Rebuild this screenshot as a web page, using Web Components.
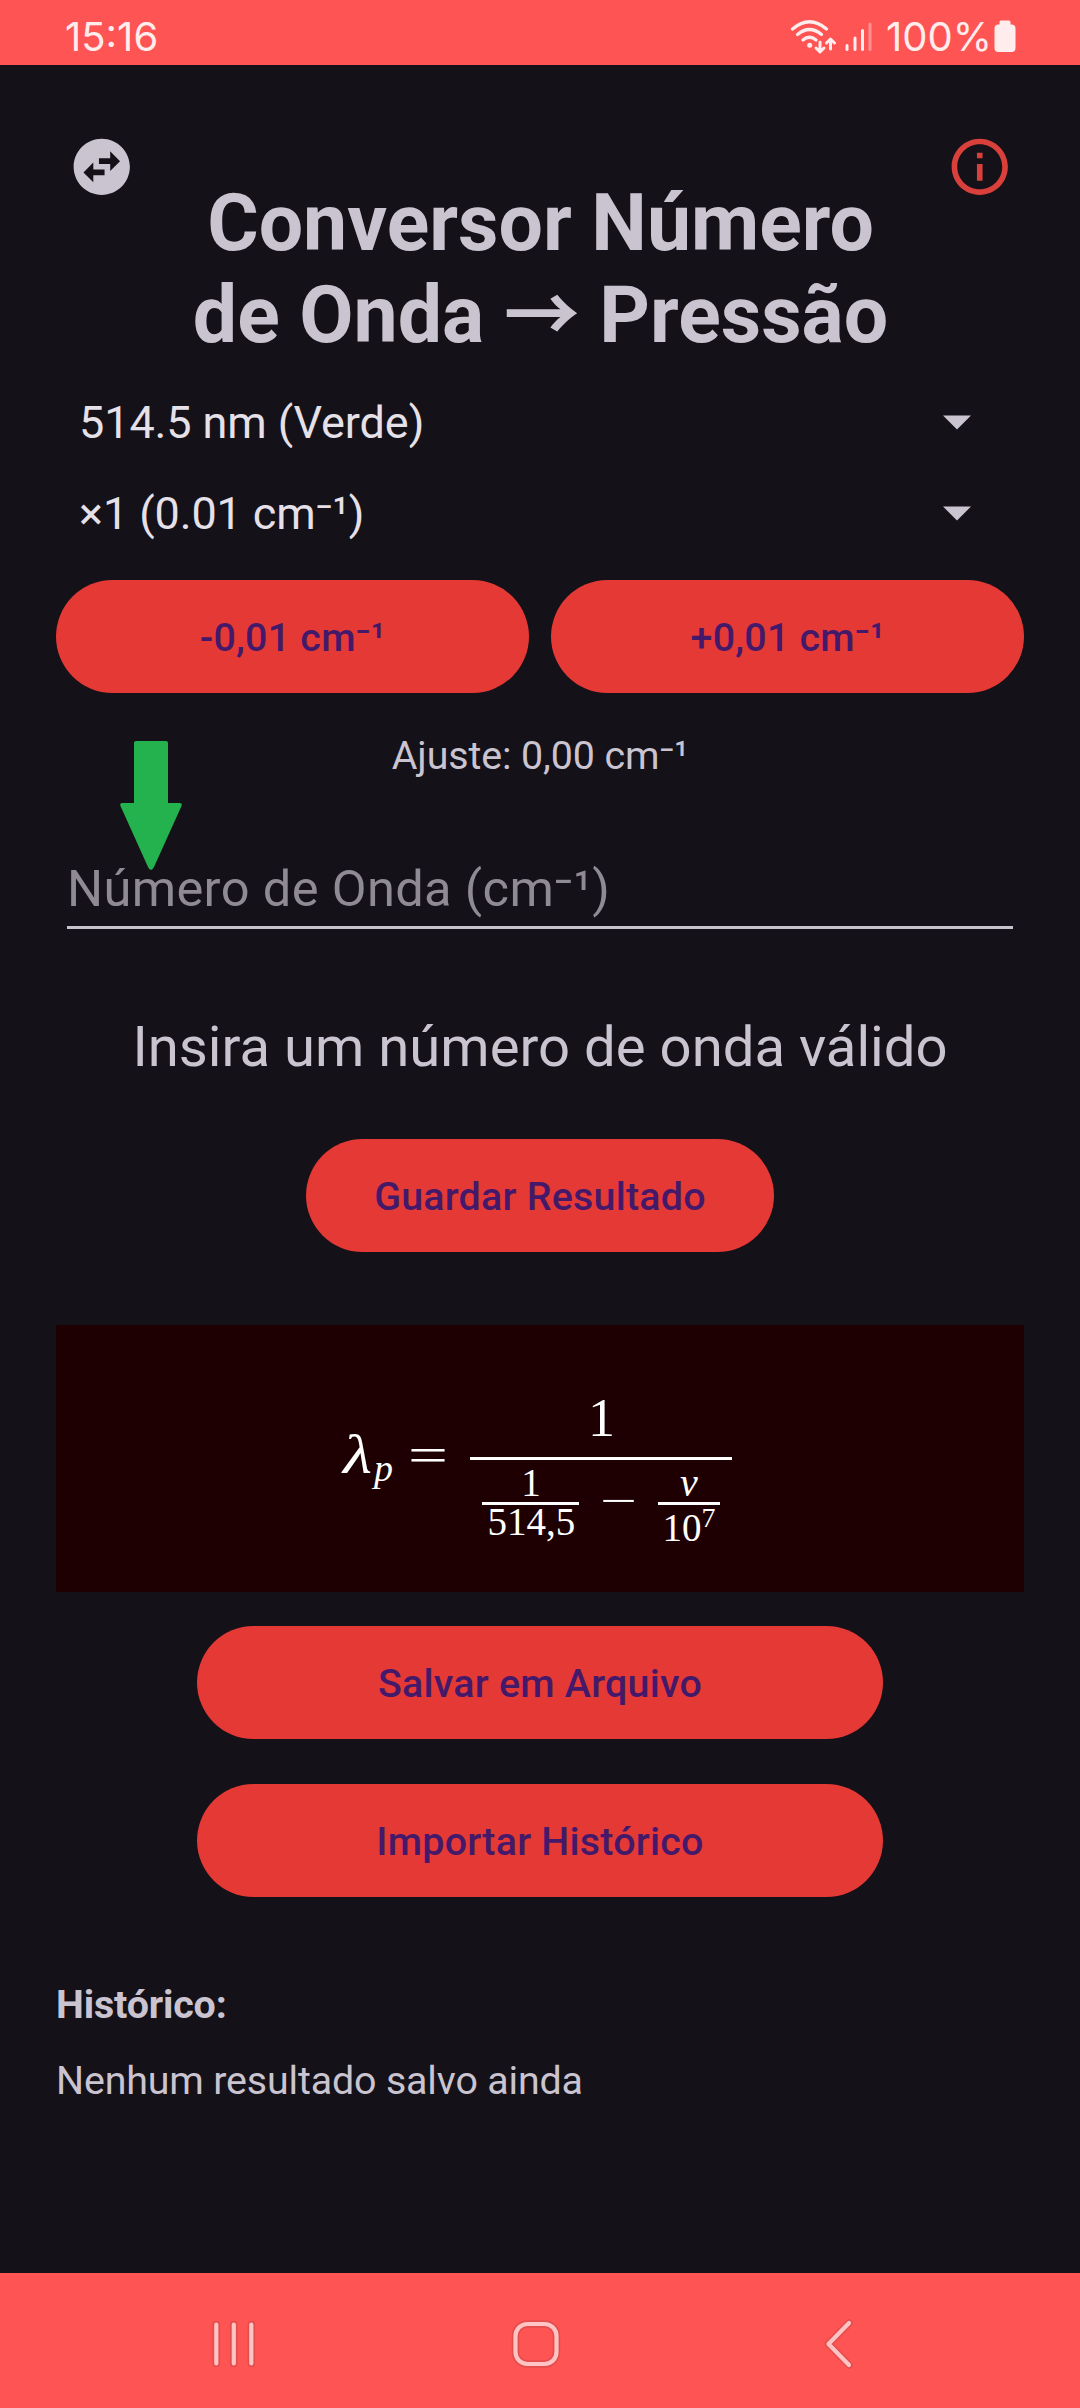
<!DOCTYPE html>
<html lang="pt-BR">
<head>
<meta charset="utf-8">
<title>Conversor Número de Onda → Pressão</title>
<style>
html,body{margin:0;padding:0;background:#141118}
body{font-family:Roboto,"Liberation Sans",sans-serif;color:#cac4d0}
</style>
</head>
<body>
<converter-app></converter-app>
<script>
const define=(name,html)=>{
  const t=document.createElement('template');
  t.innerHTML=html;
  customElements.define(name,class extends HTMLElement{
    constructor(){
      super();
      this.attachShadow({mode:'open'}).append(t.content.cloneNode(true));
    }
  });
};

define('status-bar',`
<style>
:host{display:flex;box-sizing:border-box;height:65px;padding:0 64px 0 65px;background:#ff5454;color:#ffeded;align-items:center;justify-content:space-between;font:40px/48px Inter,Roboto,sans-serif}
.time,.pct{padding-top:8px}
.right{display:flex;align-items:center}
svg{display:block}
.pct{margin-left:12px}
.battery{margin-left:2px}
</style>
<span class="time">15:16</span>
<div class="right">
  <svg width="84" height="65" viewBox="790 0 84 65" fill="none" stroke="#ffeded" stroke-width="3" stroke-linecap="round" stroke-linejoin="round">
    <path d="M792.500 29Q809.500 14.500 826.500 29M797.500 34.500Q809.500 24.500 821.500 34.500M803 40Q809.500 34.500 816 40" stroke-width="3.300"/>
    <circle cx="809.700" cy="45.300" r="2.500" fill="#ffeded" stroke="none"/>
    <path d="M820 42V51M816 48L820 52L824 48M830.500 49V40M826.500 43L830.500 39L834.500 43"/>
    <path d="M847 45.500V49.500M855 38V49.500M862.500 30.500V49.500"/>
    <path d="M870 24V49.500" opacity=".4"/>
  </svg>
  <span class="pct">100%</span>
  <svg class="battery" width="22" height="65" viewBox="0 0 22 65"><path d="M7 20.500h8q1.500 0 1.500 1.500v2.500h1q4 0 4 4V48q0 4-4 4h-13q-4 0-4-4V28.500q0-4 4-4h1V22q0-1.500 1.500-1.500z" fill="#ffeded"/></svg>
</div>`);

define('app-header',`
<style>
:host{display:flex;justify-content:space-between;align-items:flex-start;height:296px;padding:0 11px 0 12px}
svg{display:block;width:67.5px;height:67.5px;margin-top:68.25px;flex:none}
h1{margin:112px 0 0;font-size:78.75px;line-height:92px;font-weight:700;text-align:center;white-space:nowrap}
</style>
<svg viewBox="0 0 24 24" fill="#cac4d0"><path fill-rule="evenodd" d="M22 12c0-5.520-4.480-10-10-10S2 6.480 2 12s4.480 10 10 10 10-4.480 10-10zm-7-5.500l3.500 3.500-3.500 3.500V11h-4V9h4V6.500zm-6 11L5.500 14 9 10.500V13h4v2H9v2.500z"/></svg>
<h1><slot></slot></h1>
<svg viewBox="0 0 24 24" fill="#d9403c"><path d="M11 7h2v2h-2zm0 4h2v6h-2zm1-9C6.480 2 2 6.480 2 12s4.480 10 10 10 10-4.480 10-10S17.520 2 12 2zm0 18c-4.410 0-8-3.590-8-8s3.590-8 8-8 8 3.590 8 8-3.590 8-8 8z"/></svg>`);

define('spinner-field',`
<style>
:host{display:flex;align-items:center;justify-content:space-between;height:91px;padding:0 53px 0 23px;font-size:45px;line-height:53px;color:#e6e0e9;letter-spacing:-.1px}
svg{display:block}
</style>
<span><slot></slot></span>
<svg width="28" height="15" viewBox="0 0 28 15"><path d="M0 .5H28L14 14.500z" fill="#cac4d0"/></svg>`);

define('pill-button',`
<style>
:host{display:block}
button{display:flex;align-items:center;justify-content:center;width:100%;height:113px;margin:0;padding:3px 0 0;border:0;border-radius:57px;background:#e53935;color:#44196a;font:500 39.375px/46px Roboto,sans-serif;letter-spacing:.25px}
</style>
<button type="button"><slot></slot></button>`);

define('wave-input',`
<style>
:host{display:block;position:relative;margin:0 11px;height:62px;border-bottom:3px solid #c8c2cc;font-size:50.625px;line-height:50px;color:#8f8a93;letter-spacing:.35px}
svg{position:absolute;left:53px;top:-123px}
</style>
<span><slot></slot></span>
<svg width="62" height="130" viewBox="0 0 62 130"><path d="M16 0H46Q48 0 48 2V62H60Q62.500 62 61.500 65L34 126Q31 132 28 126L.5 65Q-.5 62 2 62H14V2Q14 0 16 0z" fill="#24b24f"/></svg>`);

define('formula-card',`
<style>
:host{display:block;height:267px;background:#1e0002}
svg{display:block;width:968px;height:267px}
text{font-family:"Liberation Serif",serif;fill:#fff}
.i{font-style:italic}
</style>
<svg viewBox="56 1325 968 267">
  <text class="i" x="343" y="1473" font-size="54" textLength="29" lengthAdjust="spacingAndGlyphs">λ</text>
  <text class="i" x="374" y="1481" font-size="38">p</text>
  <text x="408" y="1471.500" font-size="50" textLength="40" lengthAdjust="spacingAndGlyphs">=</text>
  <text x="601.500" y="1436" font-size="54" text-anchor="middle">1</text>
  <path d="M470 1458.500H732M482 1503.500H579M658 1503.500H720" stroke="#fff" stroke-width="3"/>
  <text x="531" y="1496" font-size="39" text-anchor="middle">1</text>
  <text x="487.500" y="1535" font-size="39">514,5</text>
  <text x="600" y="1513.500" font-size="40" textLength="37" lengthAdjust="spacingAndGlyphs">−</text>
  <text class="i" x="680" y="1496" font-size="40">ν</text>
  <text x="662.500" y="1541" font-size="39">10</text>
  <text x="701.500" y="1527" font-size="28">7</text>
</svg>`);

define('nav-bar',`
<style>
:host{display:flex;align-items:center;justify-content:space-between;box-sizing:border-box;height:135px;padding:6px 222px 0 206px;background:#ff5454}
svg{display:block;width:56px;height:56px;fill:none;stroke-linecap:round;stroke-linejoin:round}
.home{margin-left:8px}
.halo{stroke:#e24d4e;stroke-width:7.5}
.line{stroke:#ffc3c3;stroke-width:4.2}
</style>
<svg viewBox="0 0 56 56"><path class="halo" d="M10.300 8.500V47.500M27.800 8.500V47.500M45.300 8.500V47.500"/><path class="line" d="M10.300 8.500V47.500M27.800 8.500V47.500M45.300 8.500V47.500"/></svg>
<svg class="home" viewBox="0 0 56 56"><rect class="halo" x="7.500" y="8" width="41" height="40" rx="12"/><rect class="line" x="7.500" y="8" width="41" height="40" rx="12"/></svg>
<svg viewBox="0 0 56 56"><path class="halo" d="M47 7L26.500 28L47 49"/><path class="line" d="M47 7L26.500 28L47 49"/></svg>`);

define('converter-app',`
<style>
:host{display:flex;flex-direction:column;width:1080px;height:2408px;background:#141118}
main{flex:1;display:flex;flex-direction:column;padding:0 56px}
.arrow{font-family:"Noto Sans CJK JP",sans-serif;font-weight:700;font-size:76px;line-height:0}
.spinners{margin-top:16px}
.pair{display:grid;grid-template-columns:1fr 1fr;gap:22px;margin-top:21px}
.adjust{margin-top:40px;font-size:39.375px;line-height:46px;text-align:center;letter-spacing:-.1px}
wave-input{margin-top:85px}
.result{margin-top:85px;font-size:56.25px;line-height:66px;text-align:center}
.save{width:468px;margin:59px auto 0}
formula-card{margin-top:73px}
.wide{width:686px;margin:34px auto 0}
.wide+.wide{margin-top:45px}
.history{font-size:39.375px;line-height:46px}
h2{margin:85px 0 0;font:inherit;font-weight:700;letter-spacing:-.15px}
p{margin:30px 0 0;letter-spacing:-.15px}
</style>
<status-bar></status-bar>
<main>
  <app-header>Conversor Número<br>de Onda <span class="arrow">→</span> Pressão</app-header>
  <div class="spinners">
    <spinner-field>514.5 nm (Verde)</spinner-field>
    <spinner-field>×1 (0.01 cm⁻¹)</spinner-field>
  </div>
  <div class="pair">
    <pill-button>-0,01 cm⁻¹</pill-button>
    <pill-button>+0,01 cm⁻¹</pill-button>
  </div>
  <div class="adjust">Ajuste: 0,00 cm⁻¹</div>
  <wave-input>Número de Onda (cm⁻¹)</wave-input>
  <div class="result">Insira um número de onda válido</div>
  <pill-button class="save">Guardar Resultado</pill-button>
  <formula-card></formula-card>
  <pill-button class="wide">Salvar em Arquivo</pill-button>
  <pill-button class="wide">Importar Histórico</pill-button>
  <section class="history">
    <h2>Histórico:</h2>
    <p>Nenhum resultado salvo ainda</p>
  </section>
</main>
<nav-bar></nav-bar>`);
</script>
</body>
</html>
